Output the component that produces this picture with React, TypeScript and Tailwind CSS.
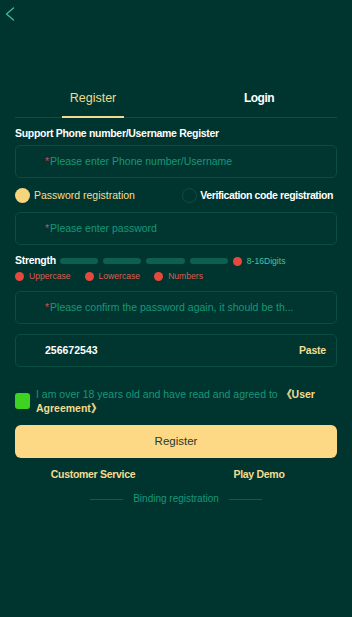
function Field({ placeholder, value, action }: { placeholder?: string; value?: string; action?: string }) {
  return (
    <div className="flex h-[33px] items-center rounded-[5px] border border-[#0b4d41] bg-[#00362f] pl-[29px] pr-[10px]">
      {value ? (
        <span className="flex-1 text-[10.5px] font-bold text-white">{value}</span>
      ) : (
        <span className="flex-1 truncate text-[10.5px] text-[#17977a]">
          <span className="mr-[1px] text-[#c4505a]">*</span>
          {placeholder}
        </span>
      )}
      {action && <span className="text-[10.5px] font-bold tracking-[-0.2px] text-[#f3dc8f]">{action}</span>}
    </div>
  )
}

function Dot({ label }: { label: string }) {
  return (
    <div className="flex items-center gap-[5px]">
      <span className="h-[9px] w-[9px] rounded-full bg-[#e5483c]" />
      <span className="text-[8.6px] leading-[10px] text-[#dc5c4e]">{label}</span>
    </div>
  )
}

export default function App() {
  return (
    <div className="min-h-[617px] w-full bg-[#00352f] [font-family:'Liberation_Sans',Arial,sans-serif]">
      <div className="h-[90px] pl-[5px] pt-[7px]">
        <svg width="10" height="14" viewBox="0 0 10 14" fill="none">
          <polyline points="8.5,1 1.5,7 8.5,13" stroke="#3dbb9c" strokeWidth="1.3" strokeLinecap="round" strokeLinejoin="round" />
        </svg>
      </div>

      <div className="mx-[15px] flex h-[28px] border-b border-[#0d4d42]">
        <div className="-mx-[5px] flex flex-1">
          <div className="flex flex-1 justify-center">
            <div className="h-[28px] border-b-2 border-[#f3d98c] px-[7.5px] text-[12.5px] leading-[17px] text-[#f3d98c]">
              Register
            </div>
          </div>
          <div className="flex flex-1 justify-center">
            <div className="text-[12px] font-bold leading-[17px] tracking-[-0.5px] text-white">Login</div>
          </div>
        </div>
      </div>

      <div className="px-[15px] pt-[8px]">
        <div className="text-[10.5px] font-bold leading-[15px] tracking-[-0.3px] text-white">
          Support Phone number/Username Register
        </div>
        <div className="mt-[4px]">
          <Field placeholder="Please enter Phone number/Username" />
        </div>

        <div className="mt-[10px] flex h-[15px] items-center justify-between pr-[4px]">
          <div className="flex items-center gap-[4px]">
            <span className="h-[15px] w-[15px] rounded-full bg-[#f7d57d]" />
            <span className="text-[10.5px] text-[#f6df92]">Password registration</span>
          </div>
          <div className="flex items-center gap-[3px]">
            <span className="h-[15px] w-[15px] rounded-full border border-[#0d4d42]" />
            <span className="text-[10.5px] font-bold tracking-[-0.4px] text-white">Verification code registration</span>
          </div>
        </div>

        <div className="mt-[9px]">
          <Field placeholder="Please enter password" />
        </div>

        <div className="mt-[10px] flex h-[12px] items-center">
          <span className="text-[10.5px] font-bold tracking-[-0.3px] text-white">Strength</span>
          <div className="ml-[4px] flex gap-[5px]">
            <span className="h-[6px] w-[38px] rounded-full bg-[#0d6050]" />
            <span className="h-[6px] w-[38px] rounded-full bg-[#0d6050]" />
            <span className="h-[6px] w-[39px] rounded-full bg-[#0d6050]" />
            <span className="h-[6px] w-[38px] rounded-full bg-[#0d6050]" />
          </div>
          <span className="ml-[5px] h-[9px] w-[9px] rounded-full bg-[#e5483c]" />
          <span className="ml-[5px] text-[8.6px] text-[#40c4a3]">8-16Digits</span>
        </div>

        <div className="mt-[4px] flex h-[10px] items-center gap-[14px]">
          <Dot label="Uppercase" />
          <Dot label="Lowercase" />
          <Dot label="Numbers" />
        </div>

        <div className="mt-[10px]">
          <Field placeholder="Please confirm the password again, it should be th..." />
        </div>
        <div className="mt-[10px]">
          <Field value="256672543" action="Paste" />
        </div>

        <div className="mt-[20px] flex items-start gap-[6px]">
          <span className="mt-[6px] h-[16px] w-[15px] shrink-0 rounded-[3px] bg-[#3ed321]" />
          <p className="text-[10.5px] leading-[14px] text-[#17977a]">
            I am over 18 years old and have read and agreed to{' '}
            <span className="font-bold text-[#f3dc8f]">《User Agreement》</span>
          </p>
        </div>

        <button
          type="button"
          className="mt-[10px] flex h-[33px] w-full items-center justify-center rounded-[6px] bg-[#fdd985] text-[11.5px] text-[#1f3b30]"
        >
          Register
        </button>

        <div className="-mx-[5px] mt-[9px] flex">
          <div className="flex-1 text-center text-[10.5px] font-bold leading-[14px] tracking-[-0.3px] text-[#f3dc8f]">
            Customer Service
          </div>
          <div className="flex-1 text-center text-[10.5px] font-bold leading-[14px] tracking-[-0.3px] text-[#f3dc8f]">
            Play Demo
          </div>
        </div>

        <div className="mt-[11px] flex items-center justify-center gap-[10px]">
          <span className="h-px w-[33px] bg-[#0e5a4b]" />
          <span className="text-[10px] leading-[14px] text-[#17977a]">Binding registration</span>
          <span className="h-px w-[33px] bg-[#0e5a4b]" />
        </div>
      </div>
    </div>
  )
}
